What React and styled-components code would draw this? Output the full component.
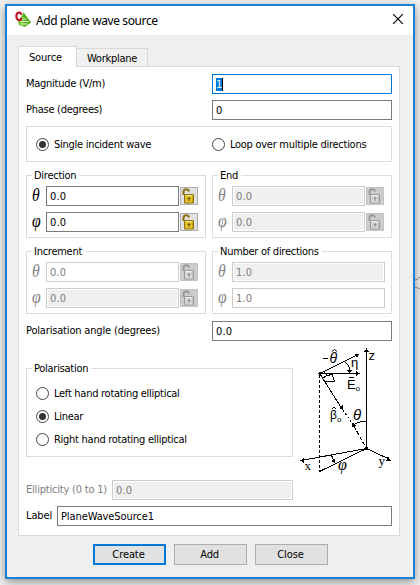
import React from "react";
import styled, { createGlobalStyle, css } from "styled-components";

const Global = createGlobalStyle`
  html, body { margin: 0; padding: 0; }
  body { width: 420px; height: 585px; overflow: hidden; background: #f0f0f0; }
  * { box-sizing: border-box; }
`;

const Desktop = styled.div`
  position: relative;
  width: 420px;
  height: 585px;
  padding: 4px 5px 6px;
  overflow: hidden;
  background: #f0f0f0;
  color: #000;
  font-family: "DejaVu Sans Condensed", "DejaVu Sans", sans-serif;
  font-stretch: condensed;
  font-size: 11px;
`;

const Squiggle = styled.svg`
  position: absolute;
  left: 415px;
  top: 275px;
`;

const Dialog = styled.section`
  width: 410px;
  height: 575px;
  border: 2px solid #1a80d3;
  background: #efefef;
  box-shadow: 0 3px 9px rgba(0, 0, 0, 0.4);
`;

const TitleBar = styled.header`
  display: flex;
  align-items: center;
  height: 29px;
  padding: 0 10px 0 8px;
  background: #fff;
`;

const Title = styled.h1`
  flex: 1;
  margin: 0 0 0 4px;
  font: 400 12px/18px "Noto Sans", sans-serif;
  letter-spacing: -0.39px;
  white-space: nowrap;
`;

const CloseIcon = styled.svg`
  margin-top: -3px;
`;

const Text = styled.span`
  display: block;
  line-height: 16px;
  letter-spacing: ${(p) => (p.$ls === undefined ? -0.27 : p.$ls)}px;
  white-space: nowrap;
  color: ${(p) => (p.$off ? "#7d7d7d" : "#000")};
`;

const Tabs = styled.nav`
  display: flex;
  align-items: flex-end;
  height: 31px;
  padding: 0 11px;
`;

const Tab = styled.div`
  display: flex;
  justify-content: center;
  align-items: center;
  border: 1px solid #d9d9d9;
  border-bottom: 0;
  ${(p) =>
    p.$active
      ? css`
          width: 59px;
          height: 21px;
          margin-bottom: -1px;
          padding: 1px 4px 0 0;
          background: #fff;
          z-index: 1;
        `
      : css`
          width: 71px;
          height: 18px;
          border-left: 0;
          padding-top: 2px;
          background: #f0f0f0;
        `}
`;

const Panel = styled.main`
  width: 382px;
  height: 470px;
  margin-left: 11px;
  padding: 7px;
  border: 1px solid #d9d9d9;
  background: #fff;
`;

const FormRow = styled.div`
  display: flex;
  align-items: center;
  justify-content: space-between;
  width: 367px;
  height: 20px;
  margin-top: ${(p) => p.$top || 0}px;
  padding-right: ${(p) => p.$right || 1}px;
`;

const Field = styled.div`
  display: flex;
  align-items: center;
  flex: ${(p) => (p.$w ? "none" : 1)};
  width: ${(p) => (p.$w ? p.$w + "px" : "auto")};
  height: 20px;
  padding: 2px 0 0 3px;
  border: 1px solid ${(p) => (p.$focus ? "#0078d7" : p.$off ? "#cccccc" : "#7a7a7a")};
  background: ${(p) => (p.$fill ? "#efefef" : "#fff")};
  box-shadow: ${(p) => (p.$fill ? "inset 0 0 0 1px #fff" : "none")};
`;

const Selected = styled.span`
  height: 13px;
  width: 7px;
  margin: -1px 0 0 0;
  border-right: 1px solid #000;
  background: #0078d7;
  color: #fff;
  line-height: 14px;
`;

const RadioBox = styled.div`
  display: grid;
  grid-template-columns: 176px 1fr;
  align-items: center;
  width: 366px;
  height: 36px;
  margin: 6px 0 0;
  padding: 1px 0 0 9px;
  border: 1px solid #dcdcdc;
`;

const RadioLabel = styled.div`
  display: flex;
  align-items: center;
  gap: 5px;
  height: 23px;
`;

const Circle = styled.span`
  display: grid;
  place-items: center;
  width: 13px;
  height: 13px;
  border: 1px solid #444;
  border-radius: 50%;
  background: #fff;

  &::after {
    content: "";
    width: 7px;
    height: 7px;
    border-radius: 50%;
    background: ${(p) => (p.$on ? "#333" : "transparent")};
  }
`;

const GroupGrid = styled.div`
  display: grid;
  grid-template-columns: 180px 180px;
  column-gap: 6px;
  row-gap: 13px;
  margin-top: 13px;
`;

const Group = styled.div`
  width: ${(p) => p.$w || 180}px;
  height: ${(p) => p.$h || 63}px;
  border: 1px solid #dcdcdc;
`;

const Legend = styled.div`
  width: max-content;
  height: 16px;
  margin: -8px 0 0 5px;
  padding: 0 3px 0 2px;
  background: #fff;
`;

const AngleRow = styled.div`
  display: flex;
  align-items: center;
  height: 20px;
  margin-top: ${(p) => p.$top}px;
  padding: 0 ${(p) => (p.$lock ? 7 : 6)}px 0 5px;
`;

const Greek = styled.i`
  width: 14px;
  font: italic 18px/20px "Liberation Serif", serif;
  color: ${(p) => (p.$off ? "#848484" : "#000")};
  margin-top: -2px;
  transform: scaleX(0.87);
  transform-origin: left;
`;

const LockButton = styled.span`
  display: block;
  width: 18px;
  height: 18px;
  margin-left: 1px;
  border: 1px solid ${(p) => (p.$off ? "#c4c4c4" : "#adadad")};
  background: ${(p) => (p.$off ? "#cccccc" : "#e1e1e1")};

  svg { display: block; }
`;

const PolarRow = styled.div`
  display: flex;
  height: 139px;
`;

const PolarGroup = styled(Group)`
  margin: 27px 2px 0 0;
  flex: none;
`;

const RadioList = styled.div`
  padding: 5px 0 0 9px;
`;

const Footer = styled.footer`
  display: flex;
  gap: 8px;
  padding: 8px 0 0 86px;
`;

const Button = styled.button`
  display: flex;
  align-items: center;
  justify-content: center;
  width: 73px;
  height: 21px;
  padding: 1px 2px 0 0;
  border: ${(p) => (p.$main ? "2px solid #0078d7" : "1px solid #adadad")};
  background: #e1e1e1;
  font: inherit;
`;

const LogoSvg = styled.svg`
  margin-top: -2px;
`;

function Logo() {
  return (
    <LogoSvg width="17" height="17" viewBox="0 0 17 17">
      <path d="M8.5 1.5L16 11.5L9.5 16L4 14L3 11Z" fill="#70c530" />
      <path d="M8.5 1.5L16 11.5L9.5 16Z" fill="#56ad26" />
      <path d="M7 8h4M5.5 10.5h8M5.500 13h7" stroke="#def7c0" />
      <path d="M6.5 3.800C5.800 .8 1.400 .6 1.400 5.300S5.800 9.900 6.500 7" fill="none" stroke="#c4162a" strokeWidth="2.2" />
    </LogoSvg>
  );
}

function Lock({ off }) {
  const dark = off ? "#999" : "#8a7110";
  return (
    <LockButton $off={off}>
      <svg width="16" height="16" viewBox="0 0 16 16">
        <path d="M2.5 7V4Q2.5 1.3 5.2 1.3Q7.5 1.3 8 3.5" fill="none" stroke={dark} strokeWidth="2" />
        <path d="M3.5 6.5h9v8.5h-9z" fill={off ? "#d6d6d6" : "#e2c128"} stroke={dark} />
        <path d="M4.5 7.5h7" stroke={off ? "#eee" : "#f9e779"} />
        <path d="M11.5 8v6.5h-7" fill="none" stroke={off ? "#c0c0c0" : "#c79e14"} />
        <path d="M6.500 10.5h3M8 9v4" stroke={off ? "#888" : "#5e4a0b"} strokeWidth="0.900" />
      </svg>
    </LockButton>
  );
}

function Radio({ on, children }) {
  return (
    <RadioLabel>
      <Circle $on={on} />
      <Text>{children}</Text>
    </RadioLabel>
  );
}

function AngleGroup({ title, value = "0.0", lock = true, off, fills }) {
  return (
    <Group>
      <Legend><Text>{title}</Text></Legend>
      {["θ", "φ"].map((g, i) => (
        <AngleRow key={g} $top={i ? 6 : 2} $lock={lock}>
          <Greek $off={off}>{g}</Greek>
          <Field $off={off} $fill={fills[i]}>
            <Text $off={off} $ls={0.2}>{value}</Text>
          </Field>
          {lock && <Lock off={off} />}
        </AngleRow>
      ))}
    </Group>
  );
}

const DiagramSvg = styled.svg`
  margin-top: 4px;
  flex: none;
  font-family: "Liberation Sans", sans-serif;
`;

function Diagram() {
  return (
    <DiagramSvg width="100" height="135" viewBox="5 5 100 135">
      <g fill="none" stroke="#000" shapeRendering="crispEdges">
        <path d="M76.5 10V108.5L11 120.5M76.5 108.5L100 119.5M76.5 108.5L29.5 131.5" />
        <path d="M30 33.5H68M30 33.5L67 15M30 34L52 69" />
        <path d="M53 70L64 86" strokeDasharray="2 2" />
        <path d="M64 86L76 108" strokeDasharray="4 2" />
        <path d="M29.5 35V131" strokeDasharray="3 2" />
        <path d="M76 81.5Q68 81 64 85" />
        <path d="M54 21.5Q60 25 59.5 31" />
        <path d="M32 38.5L37 35.5L34 31.5M37 36L42 34L44.5 41.5H35" />
        <path d="M41 115Q43 117 43.5 121" />
      </g>
      <g fill="#000" shapeRendering="crispEdges">
        <path d="M76.5 8L79 12H74ZM10 120.5L14 118V123ZM101 121L96 121L98 116ZM70 33.5L66 31V36ZM69 14L65 14L67 18ZM53.5 70L49 68L53 65ZM62 87L63 82L66 86ZM59.5 33L57 30H62ZM45.5 123L41 121L45 119Z" />
        <circle cx="30" cy="33.5" r="1.5" />
        <circle cx="76.5" cy="108.5" r="1.5" />
      </g>
      <g fill="#000">
        <path d="M33 18.5H38" stroke="#000" />
        <text x="39.5" y="23" fontSize="14" fontStyle="italic">θ</text>
        <text x="61" y="27" fontSize="13">η</text>
        <text x="57" y="49" fontSize="13">E</text>
        <text x="65.5" y="51" fontSize="8">o</text>
        <text x="40" y="79" fontSize="12">β</text>
        <text x="47" y="82" fontSize="8">o</text>
        <text x="63" y="80" fontSize="15" fontStyle="italic">θ</text>
        <text x="78.5" y="20" fontSize="13">z</text>
        <text x="14.5" y="130" fontSize="13" fontFamily="Liberation Serif, serif">x</text>
        <text x="88.5" y="125" fontSize="13" fontFamily="Liberation Serif, serif">y</text>
        <text x="48" y="130" fontSize="16" fontStyle="italic" fontFamily="Liberation Serif, serif">φ</text>
      </g>
      <path d="M59 37.5H64M42 11.5L44.5 9.5L47 11.5M42 69L44 67L46 69" fill="none" stroke="#000" />
    </DiagramSvg>
  );
}

export default function App() {
  return (
    <>
      <Global />
      <Desktop>
        <Dialog>
          <TitleBar>
            <Logo />
            <Title>Add plane wave source</Title>
            <CloseIcon width="10" height="10" viewBox="0 0 10 10">
              <path d="M0 0L10 10M10 0L0 10" stroke="#000" strokeWidth="1.100" />
            </CloseIcon>
          </TitleBar>
          <Tabs>
            <Tab $active><Text $ls={-0.15}>Source</Text></Tab>
            <Tab><Text>Workplane</Text></Tab>
          </Tabs>
          <Panel>
            <FormRow>
              <Text>Magnitude (V/m)</Text>
              <Field $w={180} $focus><Selected>1</Selected></Field>
            </FormRow>
            <FormRow $top={6}>
              <Text>Phase (degrees)</Text>
              <Field $w={180}><Text>0</Text></Field>
            </FormRow>
            <RadioBox>
              <Radio on>Single incident wave</Radio>
              <Radio>Loop over multiple directions</Radio>
            </RadioBox>
            <GroupGrid>
              <AngleGroup title="Direction" fills={[false, false]} />
              <AngleGroup title="End" off fills={[true, true]} />
              <AngleGroup title="Increment" off fills={[false, true]} />
              <AngleGroup title="Number of directions" off value="1.0" lock={false} fills={[true, false]} />
            </GroupGrid>
            <FormRow $top={7}>
              <Text $ls={-0.17}>Polarisation angle (degrees)</Text>
              <Field $w={180}><Text $ls={0.2}>0.0</Text></Field>
            </FormRow>
            <PolarRow>
              <PolarGroup $w={267} $h={89}>
                <Legend><Text>Polarisation</Text></Legend>
                <RadioList>
                  <Radio>Left hand rotating elliptical</Radio>
                  <Radio on>Linear</Radio>
                  <Radio>Right hand rotating elliptical</Radio>
                </RadioList>
              </PolarGroup>
              <Diagram />
            </PolarRow>
            <FormRow $right={100}>
              <Text $off $ls={-0.2}>Ellipticity (0 to 1)</Text>
              <Field $w={181} $off $fill><Text $off $ls={0.2}>0.0</Text></Field>
            </FormRow>
            <FormRow $top={6}>
              <Text $ls={-0.1}>Label</Text>
              <Field $w={335}><Text $ls={-0.1}>PlaneWaveSource1</Text></Field>
            </FormRow>
          </Panel>
          <Footer>
            <Button $main><Text $ls={-0.1}>Create</Text></Button>
            <Button><Text>Add</Text></Button>
            <Button><Text $ls={-0.1}>Close</Text></Button>
          </Footer>
        </Dialog>
        <Squiggle width="5" height="16" viewBox="0 0 5 16">
          <path d="M0 5Q2 5 5 2M0 12.5Q3 12.5 5 14" fill="none" stroke="#777" />
        </Squiggle>
      </Desktop>
    </>
  );
}
